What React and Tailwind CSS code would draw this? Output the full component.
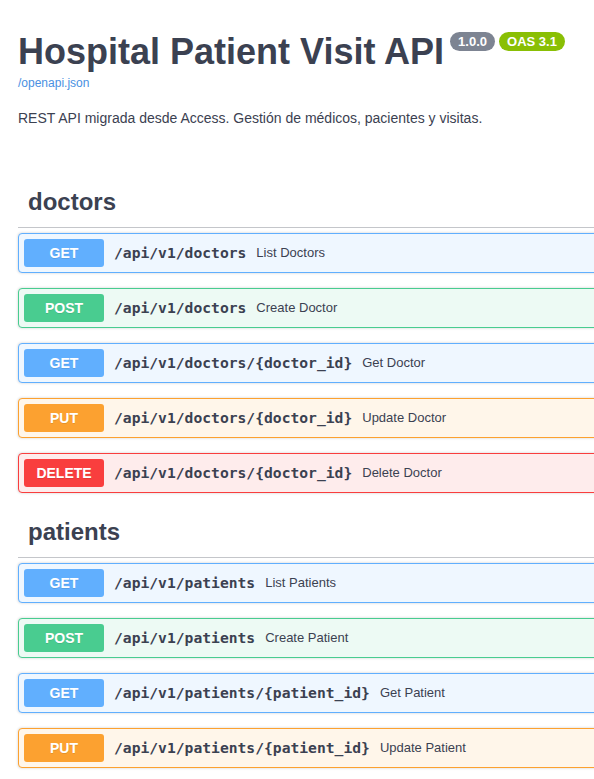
import React from "react";

const STYLES = {
  GET: { row: "border-[#61affe] bg-[#eff7ff]", badge: "bg-[#61affe]" },
  POST: { row: "border-[#49cc90] bg-[#edfaf4]", badge: "bg-[#49cc90]" },
  PUT: { row: "border-[#fca130] bg-[#fff6ea]", badge: "bg-[#fca130]" },
  DELETE: { row: "border-[#f93e3e] bg-[#feecec]", badge: "bg-[#f93e3e]" },
};

const sections = [
  {
    name: "doctors",
    ops: [
      ["GET", "/api/v1/doctors", "List Doctors"],
      ["POST", "/api/v1/doctors", "Create Doctor"],
      ["GET", "/api/v1/doctors/{doctor_id}", "Get Doctor"],
      ["PUT", "/api/v1/doctors/{doctor_id}", "Update Doctor"],
      ["DELETE", "/api/v1/doctors/{doctor_id}", "Delete Doctor"],
    ],
  },
  {
    name: "patients",
    ops: [
      ["GET", "/api/v1/patients", "List Patients"],
      ["POST", "/api/v1/patients", "Create Patient"],
      ["GET", "/api/v1/patients/{patient_id}", "Get Patient"],
      ["PUT", "/api/v1/patients/{patient_id}", "Update Patient"],
    ],
  },
];

function Op({ method, path, desc }) {
  const s = STYLES[method];
  return (
    <div
      className={`flex items-center rounded-[4px] border p-[5px] shadow-[0_0_3px_rgba(0,0,0,0.19)] ${s.row}`}
    >
      <span
        className={`w-[80px] shrink-0 rounded-[3px] py-[6px] text-center text-[14px] font-bold leading-[16px] text-white [text-shadow:0_1px_0_rgba(0,0,0,0.1)] ${s.badge}`}
      >
        {method}
      </span>
      <span className="px-[10px] font-['DejaVu_Sans_Mono',monospace] text-[14.67px] font-bold text-[#3b4151]">
        {path}
      </span>
      <span className="text-[13px] text-[#3b4151]">{desc}</span>
    </div>
  );
}

export default function App() {
  return (
    <div className="h-[779px] w-full overflow-hidden bg-white font-['Liberation_Sans',Arial,sans-serif] text-[#3b4151]">
      <div className="w-[640px] pl-[18px]">
        <div className="pt-[31px]">
          <div className="flex items-start">
            <h2 className="text-[36px] font-bold leading-[41px] text-[#3b4151]">
              Hospital Patient Visit API
            </h2>
            <span className="ml-[6px] mt-[1px] flex h-[19px] items-center rounded-full bg-[#7d8492] px-[8px] text-[13px] font-bold text-white">
              1.0.0
            </span>
            <span className="ml-[4px] mt-[1px] flex h-[19px] items-center rounded-full bg-[#89bf04] px-[8px] text-[13px] font-bold text-white">
              OAS 3.1
            </span>
          </div>
          <div className="mt-[3px] text-[12px] leading-[16px] text-[#4990e2]">/openapi.json</div>
          <p className="mt-[17px] text-[14px] leading-[20px] text-[#3b4151]">
            REST API migrada desde Access. Gestión de médicos, pacientes y visitas.
          </p>
        </div>

        <div className="mt-[50px] flex flex-col gap-[15px]">
          {sections.map((sec) => (
            <div key={sec.name}>
              <h3 className="flex h-[50px] items-center border-b border-[rgba(59,65,81,0.3)] pb-[2px] pl-[10px] text-[24px] font-bold text-[#3b4151]">
                {sec.name}
              </h3>
              <div className="mt-[5px] flex flex-col gap-[15px]">
                {sec.ops.map(([m, p, d], i) => (
                  <Op key={i} method={m} path={p} desc={d} />
                ))}
              </div>
            </div>
          ))}
        </div>
      </div>
    </div>
  );
}
